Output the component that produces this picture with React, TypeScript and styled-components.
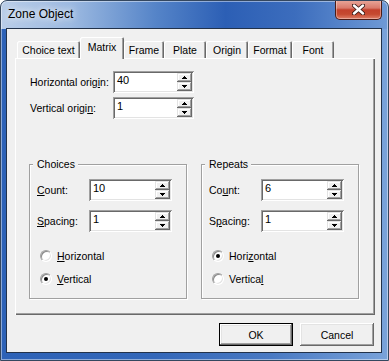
import React from "react";
import styled, { createGlobalStyle } from "styled-components";

const Global = createGlobalStyle`
  html, body { margin: 0; padding: 0; background: #ffffff; }
  body { font-family: "Liberation Sans", Arial, sans-serif; }
`;

const Window = styled.div`
  box-sizing: border-box;
  width: 389px;
  height: 361px;
  display: flex;
  flex-direction: column;
  border: 1px solid #34475f;
  border-radius: 7px 7px 0 0;
  overflow: hidden;
  background:
    linear-gradient(90deg, #b9cde8 0%, #9dbae1 18%, #5584c8 40%, #2c5fb5 58%, #3c6dbd 76%, #6f9ad6 100%) top / 100% 28px no-repeat,
    linear-gradient(90deg, #2d62b7 0%, #3367b9 40%, #4a7ac3 70%, #7aa3da 100%);
  box-shadow: inset 0 0 0 1px rgba(255, 255, 255, 0.45);
`;

const TitleBar = styled.div`
  height: 28px;
  flex-shrink: 0;
  display: flex;
  align-items: flex-start;
  padding-left: 7px;
`;

const Title = styled.span`
  margin-top: 6px;
  font-size: 12px;
  line-height: 15px;
  color: #000;
  text-shadow: 0 0 6px rgba(255, 255, 255, 0.9), 0 0 10px rgba(255, 255, 255, 0.7);
`;

const CloseButton = styled.div`
  margin-left: auto;
  margin-right: 6px;
  margin-top: -1px;
  width: 47px;
  height: 20px;
  box-sizing: border-box;
  border: 1px solid #4a1c17;
  border-top: none;
  border-radius: 0 0 5px 5px;
  background: linear-gradient(180deg, #e9a99c 0%, #d97a6b 42%, #c3412c 52%, #c54a30 75%, #df7f68 100%);
  box-shadow: inset 0 0 0 1px rgba(255, 255, 255, 0.35);
  display: flex;
  align-items: center;
  justify-content: center;
`;

const Client = styled.div`
  flex: 1;
  margin: 0 7px 8px 6px;
  padding: 8px 0 0 8px;
  background: #f0f0f0;
  box-shadow: 0 0 0 1px #22324a;
  display: flex;
  flex-direction: column;
`;

const TabRow = styled.div`
  display: flex;
  align-items: flex-end;
  height: 21px;
  margin-left: 2px;
  position: relative;
  z-index: 1;
`;

const Tab = styled.div<{ $w: number; $active?: boolean }>`
  box-sizing: border-box;
  width: ${(p) => p.$w}px;
  height: ${(p) => (p.$active ? 22 : 17)}px;
  margin-bottom: ${(p) => (p.$active ? -1 : 0)}px;
  padding-bottom: ${(p) => (p.$active ? 3 : 0)}px;
  background: #f0f0f0;
  border-radius: 2px 2px 0 0;
  box-shadow: inset 1px 1px #ffffff, inset -1px 0 #696969, inset -2px 0 #a0a0a0;
  display: flex;
  align-items: center;
  justify-content: center;
  font-size: 10.5px;
  color: #000;
`;

const Panel = styled.div`
  box-sizing: border-box;
  width: 360px;
  height: 257px;
  background: #f0f0f0;
  box-shadow: inset 1px 1px #ffffff, inset -1px -1px #696969, inset -2px -2px #a0a0a0;
  padding: 13px 0 0 14px;
  display: flex;
  flex-direction: column;
`;

const FieldRow = styled.div<{ $gap?: number; $indent?: number }>`
  display: flex;
  align-items: center;
  height: 22px;
  margin-top: ${(p) => p.$gap ?? 0}px;
  padding-left: ${(p) => p.$indent ?? 0}px;
`;

const Label = styled.span<{ $w: number }>`
  width: ${(p) => p.$w}px;
  flex-shrink: 0;
  font-size: 10.5px;
  color: #000;
`;

const SpinBox = styled.div<{ $w: number }>`
  box-sizing: border-box;
  width: ${(p) => p.$w}px;
  height: 22px;
  padding: 2px;
  background: #ffffff;
  box-shadow: inset 1px 1px #a0a0a0, inset -1px -1px #ffffff, inset 2px 2px #696969, inset -2px -2px #e3e3e3;
  display: flex;
`;

const SpinValue = styled.span`
  padding-left: 2px;
  font-size: 11px;
  line-height: 15px;
  color: #000;
`;

const SpinButtons = styled.div`
  margin-left: auto;
  width: 15px;
  display: flex;
  flex-direction: column;
`;

const SpinButton = styled.div`
  flex: 1;
  background: #f0f0f0;
  box-shadow: inset -1px -1px #696969, inset 1px 1px #e3e3e3, inset -2px -2px #a0a0a0, inset 2px 2px #ffffff;
  display: flex;
  align-items: center;
  justify-content: center;
`;

const GroupRow = styled.div`
  display: flex;
  gap: 14px;
  margin-top: 45px;
`;

const Group = styled.div`
  position: relative;
  box-sizing: border-box;
  width: 158px;
  height: 135px;
  border: 1px solid #a0a0a0;
  box-shadow: inset 1px 1px #ffffff, 1px 1px #ffffff;
  padding: 14px 0 0 7px;
  display: flex;
  flex-direction: column;
`;

const Legend = styled.span`
  position: absolute;
  top: -7px;
  left: 3px;
  padding: 0 3px 0 4px;
  background: #f0f0f0;
  font-size: 10.5px;
  line-height: 13px;
  color: #000;
`;

const RadioRow = styled.div<{ $gap: number }>`
  display: flex;
  align-items: center;
  gap: 5px;
  height: 14px;
  margin-top: ${(p) => p.$gap}px;
  padding-left: 3px;
  font-size: 10.5px;
  color: #000;
`;

const RadioCircle = styled.span<{ $checked?: boolean }>`
  box-sizing: border-box;
  width: 12px;
  height: 12px;
  border-radius: 50%;
  background: #ffffff;
  border: 1px solid;
  border-color: #a0a0a0 #ffffff #ffffff #a0a0a0;
  box-shadow: inset 1px 1px #8a8a8a, inset -1px -1px #e3e3e3;
  display: flex;
  align-items: center;
  justify-content: center;
  &::after {
    content: "";
    width: 4px;
    height: 4px;
    border-radius: 50%;
    background: ${(p) => (p.$checked ? "#000" : "transparent")};
  }
`;

const ButtonRow = styled.div`
  display: flex;
  justify-content: flex-end;
  gap: 7px;
  margin-top: 8px;
  padding-right: 7px;
`;

const Button = styled.div<{ $default?: boolean }>`
  box-sizing: border-box;
  width: 74px;
  height: 23px;
  background: #f0f0f0;
  display: flex;
  align-items: center;
  justify-content: center;
  font-size: 10.5px;
  color: #000;
  box-shadow: ${(p) =>
    p.$default
      ? "inset 0 0 0 1px #000, inset -2px -2px #696969, inset 2px 2px #fff, inset -3px -3px #a0a0a0, inset 3px 3px #e3e3e3"
      : "inset -1px -1px #696969, inset 1px 1px #fff, inset -2px -2px #a0a0a0, inset 2px 2px #e3e3e3"};
`;

const Arrow = ({ down }: { down?: boolean }) => (
  <svg width="5" height="3" viewBox="0 0 5 3" shapeRendering="crispEdges">
    <polygon points={down ? "0,0 5,0 2.5,3" : "0,3 5,3 2.5,0"} fill="#000" />
  </svg>
);

const Spinner = ({ value, width }: { value: string; width: number }) => (
  <SpinBox $w={width}>
    <SpinValue>{value}</SpinValue>
    <SpinButtons>
      <SpinButton>
        <Arrow />
      </SpinButton>
      <SpinButton>
        <Arrow down />
      </SpinButton>
    </SpinButtons>
  </SpinBox>
);

const tabs = [
  { name: "Choice text", w: 63 },
  { name: "Matrix", w: 44, active: true },
  { name: "Frame", w: 40 },
  { name: "Plate", w: 42 },
  { name: "Origin", w: 42 },
  { name: "Format", w: 44 },
  { name: "Font", w: 42 },
];

type GroupProps = {
  title: string;
  count: string;
  countLabel: React.ReactNode;
  spacingLabel: React.ReactNode;
  hLabel: React.ReactNode;
  vLabel: React.ReactNode;
  vertical: boolean;
};

const MatrixGroup = ({ title, count, countLabel, spacingLabel, hLabel, vLabel, vertical }: GroupProps) => (
  <Group>
    <Legend>{title}</Legend>
    <FieldRow>
      <Label $w={52}>{countLabel}</Label>
      <Spinner value={count} width={83} />
    </FieldRow>
    <FieldRow $gap={9}>
      <Label $w={52}>{spacingLabel}</Label>
      <Spinner value="1" width={83} />
    </FieldRow>
    <RadioRow $gap={17}>
      <RadioCircle $checked={!vertical} />
      <span>{hLabel}</span>
    </RadioRow>
    <RadioRow $gap={9}>
      <RadioCircle $checked={vertical} />
      <span>{vLabel}</span>
    </RadioRow>
  </Group>
);

export default function App() {
  return (
    <>
      <Global />
      <Window>
        <TitleBar>
          <Title>Zone Object</Title>
          <CloseButton>
            <svg width="13" height="11" viewBox="0 0 13 11">
              <path d="M2 1.5 L11 9.5 M11 1.5 L2 9.5" stroke="#3a1a16" strokeWidth="4.2" strokeLinecap="round" />
              <path d="M2 1.5 L11 9.5 M11 1.5 L2 9.5" stroke="#ffffff" strokeWidth="2.4" strokeLinecap="round" />
            </svg>
          </CloseButton>
        </TitleBar>
        <Client>
          <TabRow>
            {tabs.map((t) => (
              <Tab key={t.name} $w={t.w} $active={t.active}>
                {t.name}
              </Tab>
            ))}
          </TabRow>
          <Panel>
            <FieldRow $indent={1}>
              <Label $w={83}>
                Horizontal orig<u>i</u>n:
              </Label>
              <Spinner value="40" width={81} />
            </FieldRow>
            <FieldRow $gap={4} $indent={1}>
              <Label $w={83}>
                Vertical origi<u>n</u>:
              </Label>
              <Spinner value="1" width={81} />
            </FieldRow>
            <GroupRow>
              <MatrixGroup
                title="Choices"
                count="10"
                countLabel={<><u>C</u>ount:</>}
                spacingLabel={<><u>S</u>pacing:</>}
                hLabel={<><u>H</u>orizontal</>}
                vLabel={<><u>V</u>ertical</>}
                vertical
              />
              <MatrixGroup
                title="Repeats"
                count="6"
                countLabel={<>Co<u>u</u>nt:</>}
                spacingLabel={<>S<u>p</u>acing:</>}
                hLabel={<>Hori<u>z</u>ontal</>}
                vLabel={<>Vertica<u>l</u></>}
                vertical={false}
              />
            </GroupRow>
          </Panel>
          <ButtonRow>
            <Button $default>OK</Button>
            <Button>Cancel</Button>
          </ButtonRow>
        </Client>
      </Window>
    </>
  );
}
